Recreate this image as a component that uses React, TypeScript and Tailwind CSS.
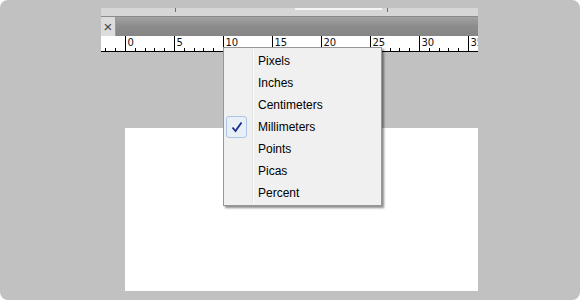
import React from 'react';

const units = ['Pixels', 'Inches', 'Centimeters', 'Millimeters', 'Points', 'Picas', 'Percent'];
const selected = 'Millimeters';

function Ruler() {
    const origin = 24;
    const major = 49;
    const minors: number[] = [];
    for (let j = -2; j * 9.8 + origin < 377; j++) {
        if (j % 5 !== 0) minors.push(Math.round(origin + j * 9.8) + 0.5);
    }
    const majors: number[] = [];
    for (let k = 0; k < 8; k++) majors.push(origin + k * major + 0.5);
    return (
        <svg width={377} height={16} className="block bg-white">
            <line x1={0} y1={15.5} x2={377} y2={15.5} stroke="#000"/>
            {minors.map(x => (
                <line key={x} x1={x} y1={12} x2={x} y2={16} stroke="#000"/>
            ))}
            {majors.map((x, k) => (
                <g key={x}>
                    <line x1={x} y1={0} x2={x} y2={16} stroke="#000"/>
                    <text x={x + 2} y={10} fontSize={10} fontFamily="'DejaVu Sans', sans-serif" fill="#111">
                        {k * 5}
                    </text>
                </g>
            ))}
        </svg>
    );
}

export default function App() {
    return (
        <div className="w-[580px] h-[300px] bg-white" style={{fontFamily: "'Liberation Sans', Arial, sans-serif"}}>
            <div className="relative w-[580px] h-[300px] rounded-lg bg-[#c1c1c1] overflow-hidden pt-[8px]">
                {/* captured window strip */}
                <div className="ml-[101px] w-[377px]">
                    <div className="flex items-start h-[8px] bg-[#d6d6d6]">
                        <div className="w-[74px]"/>
                        <div className="w-px h-[4px] bg-[#707070]"/>
                        <div className="w-[119px]"/>
                        <div className="w-[87px] h-[2px] bg-[#f4f4f4]"/>
                        <div className="w-[5px]"/>
                        <div className="w-px h-[4px] bg-[#707070]"/>
                    </div>
                    <div className="h-px bg-[#8a8a8a]"/>
                    <div className="flex h-[19px]">
                        <div className="w-[15px] bg-[#dcdcdc] border-r border-[#9a9a9a] flex items-center justify-center text-[15px] leading-none text-[#444]">×</div>
                        <div className="flex-1 bg-gradient-to-b from-[#a2a2a2] via-[#8c8c8c] to-[#858585]"/>
                    </div>
                    <Ruler/>
                </div>

                {/* canvas page */}
                <div className="ml-[125px] mt-[76px] w-[353px] h-[163px] bg-white"/>

                {/* units menu */}
                <div className="absolute left-[223px] top-[47px] w-[159px] h-[159px] bg-[#f0f0f0] border border-[#979797] shadow-[2px_2px_2px_rgba(0,0,0,0.45)] py-[2px]">
                    <div className="absolute left-[28px] top-[2px] bottom-[2px] w-px bg-[#e2e3e3]"/>
                    <div className="absolute left-[29px] top-[2px] bottom-[2px] w-px bg-white"/>
                    {units.map(u => (
                        <div key={u} className="relative flex items-center h-[22px]">
                            <div className="w-[34px] h-full flex items-center pl-[2px]">
                                {u === selected && (
                                    <div className="w-[21px] h-[22px] rounded-[3px] border border-[#a9c6e8] bg-[#e8eff7] flex items-center justify-center">
                                        <svg width="12" height="12" viewBox="0 0 12 12">
                                            <path d="M1.5 6.5 L4.5 10 L10.5 1.5" fill="none" stroke="#1c2a8c" strokeWidth="1.8"/>
                                        </svg>
                                    </div>
                                )}
                            </div>
                            <span className="text-[12px] text-black">{u}</span>
                        </div>
                    ))}
                </div>
            </div>
        </div>
    );
}
